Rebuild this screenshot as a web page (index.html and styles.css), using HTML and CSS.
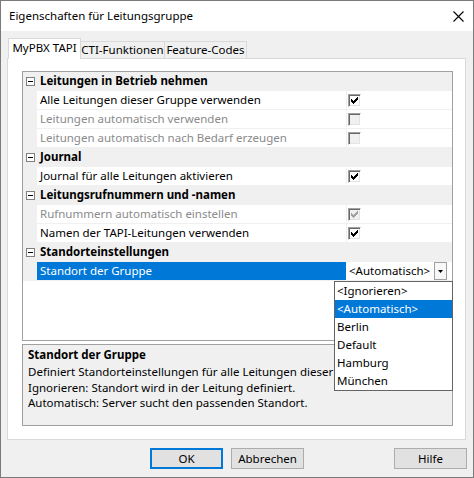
FILE: index.html
```html
<!DOCTYPE html>
<html lang="de">
<head>
<meta charset="utf-8">
<title>Eigenschaften für Leitungsgruppe</title>
<link rel="stylesheet" href="styles.css">
</head>
<body>
<div class="window">
  <div class="titlebar">
    <span class="title">Eigenschaften für Leitungsgruppe</span>
    <svg class="close" width="11" height="11" viewBox="0 0 11 11"><path d="M0.5 0.5L10.5 10.5M10.5 0.5L0.5 10.5" stroke="#000" stroke-width="1.1" fill="none"/></svg>
  </div>
  <div class="body">
    <div class="tabs">
      <div class="tab active">MyPBX TAPI</div>
      <div class="tab t2">CTI-Funktionen</div>
      <div class="tab t3">Feature-Codes</div>
    </div>
    <div class="page">
      <div class="grid">
        <div class="row cat"><span class="gutter"><span class="exp"></span></span><span class="name">Leitungen in Betrieb nehmen</span></div>
        <div class="row"><span class="gutter"></span><span class="name">Alle Leitungen dieser Gruppe verwenden</span><span class="value"><span class="cb"><svg width="7" height="7" viewBox="0 0 7 7"><path d="M0 2h1v3h-1zM1 3h1v3h-1zM2 4h1v3h-1zM3 3h1v3h-1zM4 2h1v3h-1zM5 1h1v3h-1zM6 0h1v3h-1z" fill="#000"/></svg></span></span></div>
        <div class="row dis"><span class="gutter"></span><span class="name">Leitungen automatisch verwenden</span><span class="value"><span class="cb off"></span></span></div>
        <div class="row dis"><span class="gutter"></span><span class="name">Leitungen automatisch nach Bedarf erzeugen</span><span class="value"><span class="cb off"></span></span></div>
        <div class="row cat"><span class="gutter"><span class="exp"></span></span><span class="name">Journal</span></div>
        <div class="row"><span class="gutter"></span><span class="name">Journal für alle Leitungen aktivieren</span><span class="value"><span class="cb"><svg width="7" height="7" viewBox="0 0 7 7"><path d="M0 2h1v3h-1zM1 3h1v3h-1zM2 4h1v3h-1zM3 3h1v3h-1zM4 2h1v3h-1zM5 1h1v3h-1zM6 0h1v3h-1z" fill="#000"/></svg></span></span></div>
        <div class="row cat"><span class="gutter"><span class="exp"></span></span><span class="name">Leitungsrufnummern und -namen</span></div>
        <div class="row dis"><span class="gutter"></span><span class="name">Rufnummern automatisch einstellen</span><span class="value"><span class="cb off"><svg width="7" height="7" viewBox="0 0 7 7"><path d="M0 2h1v3h-1zM1 3h1v3h-1zM2 4h1v3h-1zM3 3h1v3h-1zM4 2h1v3h-1zM5 1h1v3h-1zM6 0h1v3h-1z" fill="#a0a0a0"/></svg></span></span></div>
        <div class="row"><span class="gutter"></span><span class="name">Namen der TAPI-Leitungen verwenden</span><span class="value"><span class="cb"><svg width="7" height="7" viewBox="0 0 7 7"><path d="M0 2h1v3h-1zM1 3h1v3h-1zM2 4h1v3h-1zM3 3h1v3h-1zM4 2h1v3h-1zM5 1h1v3h-1zM6 0h1v3h-1z" fill="#000"/></svg></span></span></div>
        <div class="row cat"><span class="gutter"><span class="exp"></span></span><span class="name">Standorteinstellungen</span></div>
        <div class="row sel"><span class="gutter"></span><span class="name">Standort der Gruppe</span><span class="value"><span class="combo-text">&lt;Automatisch&gt;</span><span class="drop-btn"><svg width="5" height="3" viewBox="0 0 5 3"><path d="M0 0h5L2.5 3z" fill="#000"/></svg></span></span></div>
        <ul class="droplist">
          <li>&lt;Ignorieren&gt;</li>
          <li class="hl">&lt;Automatisch&gt;</li>
          <li>Berlin</li>
          <li>Default</li>
          <li>Hamburg</li>
          <li>München</li>
        </ul>
      </div>
      <div class="desc">
        <div class="desc-title">Standort der Gruppe</div>
        <p>Definiert Standorteinstellungen für alle Leitungen dieser Gruppe.</p>
        <p>Ignorieren: Standort wird in der Leitung definiert.</p>
        <p>Automatisch: Server sucht den passenden Standort.</p>
      </div>
    </div>
    <div class="buttons">
      <button class="btn default">OK</button>
      <button class="btn">Abbrechen</button>
      <button class="btn help">Hilfe</button>
    </div>
  </div>
</div>
</body>
</html>
```

FILE: styles.css
```css
* { box-sizing: border-box; }
html, body { margin: 0; padding: 0; }
body {
  font-family: "Noto Sans", "DejaVu Sans", sans-serif;
  font-size: 11.5px;
  color: #000;
  background: #fff;
}
.window {
  width: 474px;
  height: 478px;
  border: 1px solid #7a7a7a;
  background: #f0f0f0;
  display: flex;
  flex-direction: column;
  overflow: hidden;
}
.titlebar {
  height: 30px;
  flex: none;
  background: #fff;
  display: flex;
  align-items: center;
  padding: 0 9px 0 8px;
}
.title { flex: 1; line-height: 16px; font-size: 11.5px; }
.close { display: block; margin-top: 1px; }
.body { flex: 1; display: flex; flex-direction: column; }
.tabs {
  margin-top: 7px;
  height: 20px;
  display: flex;
  align-items: flex-end;
  padding-left: 7px;
}
.tab {
  height: 17px;
  border: 1px solid #d9d9d9;
  border-bottom: none;
  background: #f0f0f0;
  text-align: center;
  line-height: 16px;
  white-space: nowrap;
}
.tab.active {
  width: 73px;
  height: 21px;
  margin-bottom: -1px;
  background: #fff;
  position: relative;
  z-index: 1;
  line-height: 18px;
}
.tab.t2 { width: 85px; margin-left: -1px; }
.tab.t3 { width: 83px; margin-left: -1px; }
.page {
  margin: 0 7px 0 6px;
  height: 382px;
  flex: none;
  border: 1px solid #d9d9d9;
  background: #fff;
  padding: 12px 12px 13px 14px;
  display: flex;
  flex-direction: column;
  gap: 3px;
}
.grid {
  height: 270px;
  flex: none;
  border: 1px solid #a0a0a0;
  background: #fff;
  position: relative;
}
.row {
  display: flex;
  height: 19px;
}
.gutter {
  width: 14px;
  flex: none;
  background: #f0f0f0;
  padding: 5px 0 0 3px;
}
.exp {
  display: block;
  width: 9px;
  height: 9px;
  border: 1px solid #808080;
  background: #fff;
  position: relative;
}
.exp::after {
  content: "";
  position: absolute;
  left: 1px;
  top: 3px;
  width: 5px;
  height: 1px;
  background: #000;
}
.name {
  width: 310px;
  flex: none;
  padding-left: 3px;
  line-height: 18px;
  border-right: 1px solid #f0f0f0;
  border-bottom: 1px solid #f0f0f0;
  white-space: nowrap;
  overflow: hidden;
}
.value {
  flex: 1;
  display: flex;
  align-items: center;
  border-bottom: 1px solid #f0f0f0;
  padding: 0 5px 0 1px;
}
.cat { background: #f0f0f0; }
.cat .name {
  flex: 1;
  width: auto;
  font-weight: bold;
  border: none;
}
.dis .name { color: #8a8a8a; }
.cb {
  width: 13px;
  height: 13px;
  border: 1px solid;
  border-color: #a0a0a0 #fff #fff #a0a0a0;
  box-shadow: inset 1px 1px 0 #696969, inset -1px -1px 0 #e3e3e3;
  background: #fff;
  display: flex;
  align-items: center;
  justify-content: center;
  margin-top: 1px;
}
.cb.off { background: #f0f0f0; }
.sel .name { background: #0078d7; color: #fff; border-right-color: #fff; }
.combo-text { padding-left: 1px; line-height: 18px; }
.drop-btn {
  margin-left: auto;
  width: 13px;
  height: 18px;
  border: 1px solid #a0a0a0;
  background: #f8f8f8;
  display: flex;
  align-items: center;
  justify-content: center;
}
.droplist {
  list-style: none;
  margin: 0;
  padding: 0;
  position: absolute;
  left: 311px;
  top: 209px;
  width: 119px;
  height: 110px;
  border: 1px solid #646464;
  background: #fff;
  z-index: 2;
}
.droplist li {
  height: 18px;
  line-height: 18px;
  padding-left: 2px;
  white-space: nowrap;
}
.droplist li.hl { background: #0078d7; color: #fff; }
.desc {
  height: 82px;
  flex: none;
  border: 1px solid #a0a0a0;
  background: #f0f0f0;
  padding: 2px 5px 0;
  overflow: hidden;
}
.desc-title { font-weight: bold; line-height: 16px; margin-bottom: 1px; }
.desc p { margin: 0; line-height: 15.5px; white-space: nowrap; }
.buttons {
  display: flex;
  gap: 8px;
  margin-top: 8px;
  padding: 0 6px 0 149px;
}
.btn {
  width: 73px;
  height: 21px;
  border: 1px solid #adadad;
  background: #e1e1e1;
  font: inherit;
  color: #000;
  line-height: 18px;
  padding: 0;
  text-align: center;
}
.btn.default { border: 2px solid #0078d7; }
.btn.help { margin-left: auto; }
```
